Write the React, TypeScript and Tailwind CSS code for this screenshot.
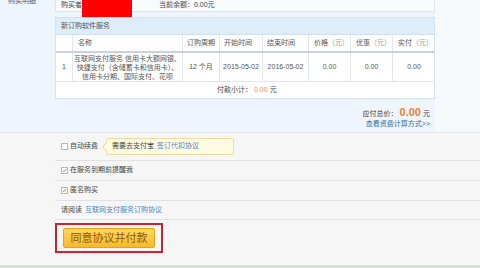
const font = { fontFamily: '"Liberation Sans", "Noto Sans CJK SC", sans-serif' };

function Check({ checked }: { checked?: boolean }) {
  return (
    <span className="inline-flex h-[7px] w-[7px] items-center justify-center border border-[#b9b9b9] bg-white">
      {checked && (
        <svg width="7" height="7" viewBox="0 0 7 7">
          <path d="M1.2 3.6 L2.8 5.2 L5.8 1.2" fill="none" stroke="#555" strokeWidth="0.9" />
        </svg>
      )}
    </span>
  );
}

const cols = "grid grid-cols-[17px_110px_37px_43px_46px_42px_42px_42px]";

export default function App() {
  return (
    <div className="w-[480px] h-[268px] overflow-hidden bg-[#f6f6f6] text-[7px] text-[#444] flex flex-col" style={font}>
      {/* top panel */}
      <div className="flex h-[133px] border-b border-[#e3e6ea]">
        <div className="w-[435px] bg-[#eef5fc] flex">
          <div className="w-[55px] pl-[8px] -mt-[4px] text-[#555]">购买明细</div>
          <div className="w-[380px] flex flex-col">
            <div className="h-[12px] bg-[#f8fbfe] border border-t-0 border-[#dbe5ee] flex items-center pl-[5px]">
              <span>购买者</span>
              <span className="w-[50px] h-[18px] bg-[#ff0000] self-start"></span>
              <span className="ml-[27px]">当前余额：0.00元</span>
            </div>
            <div className="mt-[5px] border border-[#d3e1ee] bg-white">
              <div className="h-[17px] bg-[#deedfa] border-b border-[#d0dfec] flex items-center pl-[5px] text-[#555]">新订购软件服务</div>
              <div className={`${cols} h-[18px] border-b-2 border-[#c9d3dc] text-[#555]`}>
                <div className="border-r border-[#e0e6ec]"></div>
                <div className="border-r border-[#e0e6ec] flex items-center pl-[5px]">名称</div>
                <div className="border-r border-[#e0e6ec] flex items-center justify-center">订购周期</div>
                <div className="border-r border-[#e0e6ec] flex items-center pl-[4px]">开始时间</div>
                <div className="border-r border-[#e0e6ec] flex items-center pl-[4px]">结束时间</div>
                <div className="border-r border-[#e0e6ec] flex items-center pl-[5px]">价格<span className="text-[#999]">（元）</span></div>
                <div className="border-r border-[#e0e6ec] flex items-center pl-[5px]">优惠<span className="text-[#999]">（元）</span></div>
                <div className="flex items-center pl-[5px]">实付<span className="text-[#999]">（元）</span></div>
              </div>
              <div className={`${cols} h-[29px] border-b border-[#e0e6ec] text-[#555]`}>
                <div className="border-r border-[#e0e6ec] flex items-center justify-center">1</div>
                <div className="border-r border-[#e0e6ec] flex items-center justify-center text-center leading-[9px]">
                  互联网支付服务 信用卡大额网银、<br />快捷支付（含储蓄卡和信用卡）、<br />信用卡分期、国际支付、花呗
                </div>
                <div className="border-r border-[#e0e6ec] flex items-center justify-center">12 个月</div>
                <div className="border-r border-[#e0e6ec] flex items-center justify-center">2015-05-02</div>
                <div className="border-r border-[#e0e6ec] flex items-center justify-center">2016-05-02</div>
                <div className="border-r border-[#e0e6ec] flex items-center justify-center">0.00</div>
                <div className="border-r border-[#e0e6ec] flex items-center justify-center">0.00</div>
                <div className="flex items-center justify-center">0.00</div>
              </div>
              <div className="h-[16px] flex items-center pl-[161px]">
                付款小计：<span className="text-[#f08a5d] mx-[2px]">0.00</span>元
              </div>
            </div>
            <div className="mt-[5px] flex flex-col items-end pr-[5px]">
              <div className="flex items-baseline">
                <span>应付总价：</span>
                <span className="text-[11px] font-bold text-[#f0822a] mx-[2px]">0.00</span>
                <span>元</span>
              </div>
              <div className="text-[#2f6fa8] -mt-[2px]">查看资费计算方式&gt;&gt;</div>
            </div>
          </div>
        </div>
        <div className="flex-1 bg-[#f6f9fc]"></div>
      </div>

      {/* options */}
      <div className="pl-[55px] flex flex-col">
        <div className="h-[28px] border-b border-[#e2e2e2] flex items-center pl-[6px]">
          <Check />
          <span className="ml-[2px]">自动续费</span>
          <div className="relative ml-[8px] h-[17px] w-[128px] border border-[#f0dc9a] bg-[#fffbe2] rounded-[2px] flex items-center pl-[5px] -mt-[1px]">
            <span className="absolute -left-[4px] top-[5px] h-[6px] w-[6px] rotate-45 border-l border-b border-[#f0dc9a] bg-[#fffbe2]"></span>
            <span className="relative">需要去支付宝</span>
            <span className="relative ml-[3px] text-[#4a86c5]">签订代扣协议</span>
          </div>
        </div>
        <div className="h-[20px] border-b border-[#e2e2e2] flex items-center pl-[6px]">
          <Check checked />
          <span className="ml-[2px]">在服务到期前提醒我</span>
        </div>
        <div className="h-[20px] border-b border-[#e2e2e2] flex items-center pl-[6px]">
          <Check checked />
          <span className="ml-[2px]">匿名购买</span>
        </div>
        <div className="h-[19px] border-b border-[#e2e2e2] flex items-center pl-[6px]">
          <span>请阅读</span>
          <span className="ml-[3px] text-[#4a86c5]">互联网支付服务订购协议</span>
        </div>
        <div className="mt-[3px] w-[108px] h-[30px] border-2 border-[#d0222a] flex items-center justify-center">
          <div className="w-[92px] h-[20px] rounded-[2px] border border-[#e5a418] bg-gradient-to-b from-[#ffd65a] to-[#f7b924] flex items-center justify-center text-[11px] text-[#8a5a12]">
            同意协议并付款
          </div>
        </div>
      </div>
      <div className="flex-1"></div>
      <div className="h-[3px] bg-[#d3e8d3]"></div>
    </div>
  );
}
